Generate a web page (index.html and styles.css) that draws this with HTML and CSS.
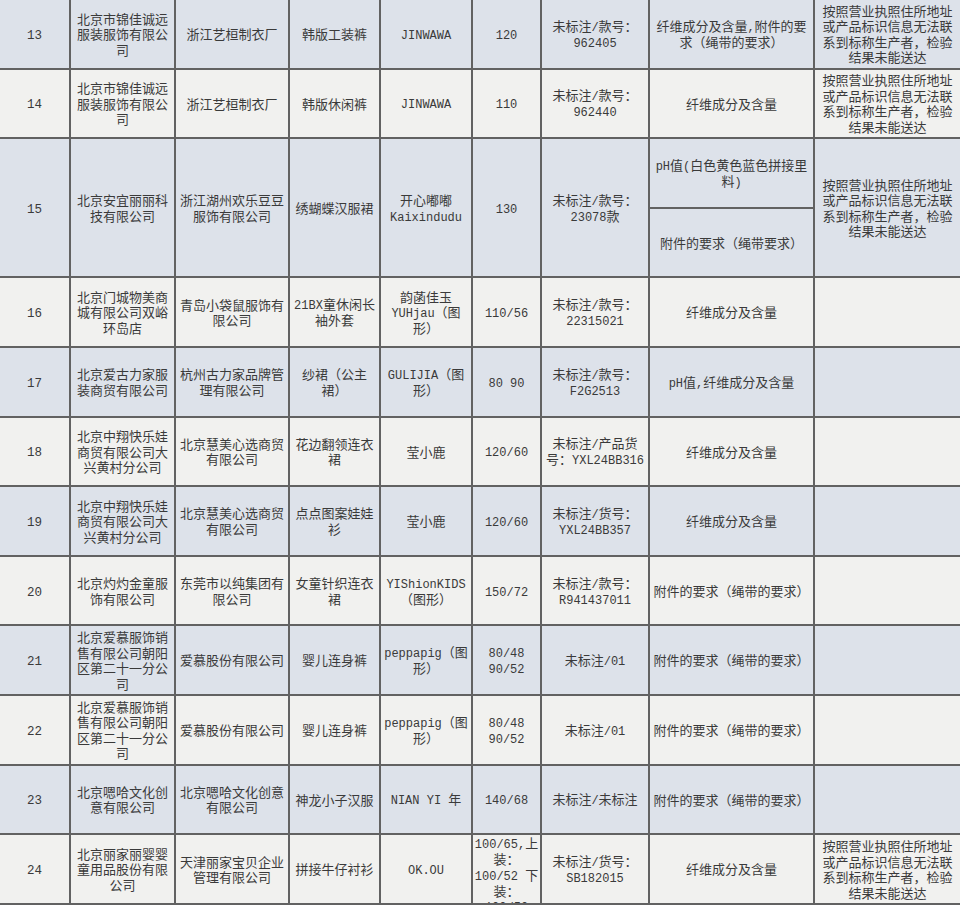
FILE: index.html
```html
<!DOCTYPE html>
<html lang="zh-CN">
<head>
<meta charset="utf-8">
<title>抽查结果</title>
<link rel="stylesheet" href="styles.css">
</head>
<body>
<table class="grid">
<colgroup>
<col class="c1"><col class="c2"><col class="c3"><col class="c4"><col class="c5"><col class="c6"><col class="c7"><col class="c8"><col class="c9">
</colgroup>
<tbody>
<tr class="blue">
<td class="num"><span class="l">13</span></td>
<td>北京市锦佳诚远<br>服装服饰有限公<br>司</td>
<td>浙江艺桓制衣厂</td>
<td>韩版工装裤</td>
<td><span class="l">JINWAWA</span></td>
<td><span class="l">120</span></td>
<td>未标注<span class="l">/</span>款号：<br><span class="l">962405</span></td>
<td>纤维成分及含量<span class="l">,</span>附件的要<br>求（绳带的要求）</td>
<td class="last">按照营业执照住所地址<br>或产品标识信息无法联<br>系到标称生产者，检验<br>结果未能送达</td>
</tr>
<tr class="white">
<td class="num"><span class="l">14</span></td>
<td>北京市锦佳诚远<br>服装服饰有限公<br>司</td>
<td>浙江艺桓制衣厂</td>
<td>韩版休闲裤</td>
<td><span class="l">JINWAWA</span></td>
<td><span class="l">110</span></td>
<td>未标注<span class="l">/</span>款号：<br><span class="l">962440</span></td>
<td>纤维成分及含量</td>
<td class="last">按照营业执照住所地址<br>或产品标识信息无法联<br>系到标称生产者，检验<br>结果未能送达</td>
</tr>
<tr class="blue">
<td class="num" rowspan="2"><span class="l">15</span></td>
<td rowspan="2">北京安宜丽丽科<br>技有限公司</td>
<td rowspan="2">浙江湖州欢乐豆豆<br>服饰有限公司</td>
<td rowspan="2">绣蝴蝶汉服裙</td>
<td rowspan="2">开心嘟嘟<br><span class="l">Kaixindudu</span></td>
<td rowspan="2"><span class="l">130</span></td>
<td rowspan="2">未标注<span class="l">/</span>款号：<br><span class="l">23078</span>款</td>
<td><span class="l">pH</span>值<span class="l">(</span>白色黄色蓝色拼接里<br>料<span class="l">)</span></td>
<td class="last" rowspan="2">按照营业执照住所地址<br>或产品标识信息无法联<br>系到标称生产者，检验<br>结果未能送达</td>
</tr>
<tr class="blue">
<td>附件的要求（绳带要求）</td>
</tr>
<tr class="white">
<td class="num"><span class="l">16</span></td>
<td>北京门城物美商<br>城有限公司双峪<br>环岛店</td>
<td>青岛小袋鼠服饰有<br>限公司</td>
<td><span class="l">21BX</span>童休闲长<br>袖外套</td>
<td>韵菡佳玉<br><span class="l">YUHjau</span>（图<br>形）</td>
<td><span class="l">110/56</span></td>
<td>未标注<span class="l">/</span>款号：<br><span class="l">22315021</span></td>
<td>纤维成分及含量</td>
<td class="last"></td>
</tr>
<tr class="blue">
<td class="num"><span class="l">17</span></td>
<td>北京爱古力家服<br>装商贸有限公司</td>
<td>杭州古力家品牌管<br>理有限公司</td>
<td>纱裙（公主<br>裙）</td>
<td><span class="l">GULIJIA</span>（图<br>形）</td>
<td><span class="l">80 90</span></td>
<td>未标注<span class="l">/</span>款号：<br><span class="l">F2G2513</span></td>
<td><span class="l">pH</span>值<span class="l">,</span>纤维成分及含量</td>
<td class="last"></td>
</tr>
<tr class="white">
<td class="num"><span class="l">18</span></td>
<td>北京中翔快乐娃<br>商贸有限公司大<br>兴黄村分公司</td>
<td>北京慧美心选商贸<br>有限公司</td>
<td>花边翻领连衣<br>裙</td>
<td>莹小鹿</td>
<td><span class="l">120/60</span></td>
<td>未标注<span class="l">/</span>产品货<br>号：<span class="l">YXL24BB316</span></td>
<td>纤维成分及含量</td>
<td class="last"></td>
</tr>
<tr class="blue">
<td class="num"><span class="l">19</span></td>
<td>北京中翔快乐娃<br>商贸有限公司大<br>兴黄村分公司</td>
<td>北京慧美心选商贸<br>有限公司</td>
<td>点点图案娃娃<br>衫</td>
<td>莹小鹿</td>
<td><span class="l">120/60</span></td>
<td>未标注<span class="l">/</span>货号：<br><span class="l">YXL24BB357</span></td>
<td>纤维成分及含量</td>
<td class="last"></td>
</tr>
<tr class="white">
<td class="num"><span class="l">20</span></td>
<td>北京灼灼金童服<br>饰有限公司</td>
<td>东莞市以纯集团有<br>限公司</td>
<td>女童针织连衣<br>裙</td>
<td><span class="l">YIShionKIDS</span><br>（图形）</td>
<td><span class="l">150/72</span></td>
<td>未标注<span class="l">/</span>款号：<br><span class="l">R941437011</span></td>
<td>附件的要求（绳带的要求）</td>
<td class="last"></td>
</tr>
<tr class="blue">
<td class="num"><span class="l">21</span></td>
<td>北京爱慕服饰销<br>售有限公司朝阳<br>区第二十一分公<br>司</td>
<td>爱慕股份有限公司</td>
<td>婴儿连身裤</td>
<td><span class="l">peppapig</span>（图<br>形）</td>
<td><span class="l">80/48<br>90/52</span></td>
<td>未标注<span class="l">/01</span></td>
<td>附件的要求（绳带的要求）</td>
<td class="last"></td>
</tr>
<tr class="white">
<td class="num"><span class="l">22</span></td>
<td>北京爱慕服饰销<br>售有限公司朝阳<br>区第二十一分公<br>司</td>
<td>爱慕股份有限公司</td>
<td>婴儿连身裤</td>
<td><span class="l">peppapig</span>（图<br>形）</td>
<td><span class="l">80/48<br>90/52</span></td>
<td>未标注<span class="l">/01</span></td>
<td>附件的要求（绳带的要求）</td>
<td class="last"></td>
</tr>
<tr class="blue">
<td class="num"><span class="l">23</span></td>
<td>北京嗯哈文化创<br>意有限公司</td>
<td>北京嗯哈文化创意<br>有限公司</td>
<td>神龙小子汉服</td>
<td><span class="l">NIAN YI </span>年</td>
<td><span class="l">140/68</span></td>
<td>未标注<span class="l">/</span>未标注</td>
<td>附件的要求（绳带的要求）</td>
<td class="last"></td>
</tr>
<tr class="white">
<td class="num"><span class="l">24</span></td>
<td>北京丽家丽婴婴<br>童用品股份有限<br>公司</td>
<td>天津丽家宝贝企业<br>管理有限公司</td>
<td>拼接牛仔衬衫</td>
<td><span class="l">OK.OU</span></td>
<td class="top"><div class="clip"><span class="l">100/65,</span>上<br>装：<br><span class="l">100/52 </span>下<br>装：<br><span class="l">100/50</span></div></td>
<td>未标注<span class="l">/</span>货号：<br><span class="l">SB182015</span></td>
<td>纤维成分及含量</td>
<td class="last">按照营业执照住所地址<br>或产品标识信息无法联<br>系到标称生产者，检验<br>结果未能送达</td>
</tr>
</tbody>
</table>
</body>
</html>
```
FILE: styles.css
```css
html, body {
  margin: 0;
  padding: 0;
  background: #f1f1ef;
}
body {
  width: 960px;
  height: 905px;
  overflow: hidden;
}
.grid {
  width: 960px;
  table-layout: fixed;
  border-collapse: collapse;
  font-family: "Noto Sans CJK SC", "Liberation Sans", sans-serif;
  font-size: 13px;
  line-height: 15.5px;
  color: #3a3a3a;
}
.c1 { width: 70px; }
.c2 { width: 105px; }
.c3 { width: 114px; }
.c4 { width: 91px; }
.c5 { width: 92px; }
.c6 { width: 69px; }
.c7 { width: 108px; }
.c8 { width: 165px; }
.c9 { width: 146px; }
.grid td {
  height: 67.6px;
  padding: 0 1px;
  border: 2px solid #626262;
  text-align: center;
  vertical-align: middle;
  white-space: nowrap;
  overflow: hidden;
}
.grid tr:first-child td { border-top: none; }
.grid td.num { border-left: none; }
.grid td.last { border-right: none; }
.blue td { background: #dde2ea; }
.white td { background: #f1f1ef; }
.l {
  font-family: "Liberation Mono", monospace;
  font-size: 12px;
  line-height: 12px;
}
.num .l {
  font-size: 12.5px;
}
.grid td.top {
  vertical-align: top;
}
.clip {
  height: 68px;
  overflow: hidden;
}
```
